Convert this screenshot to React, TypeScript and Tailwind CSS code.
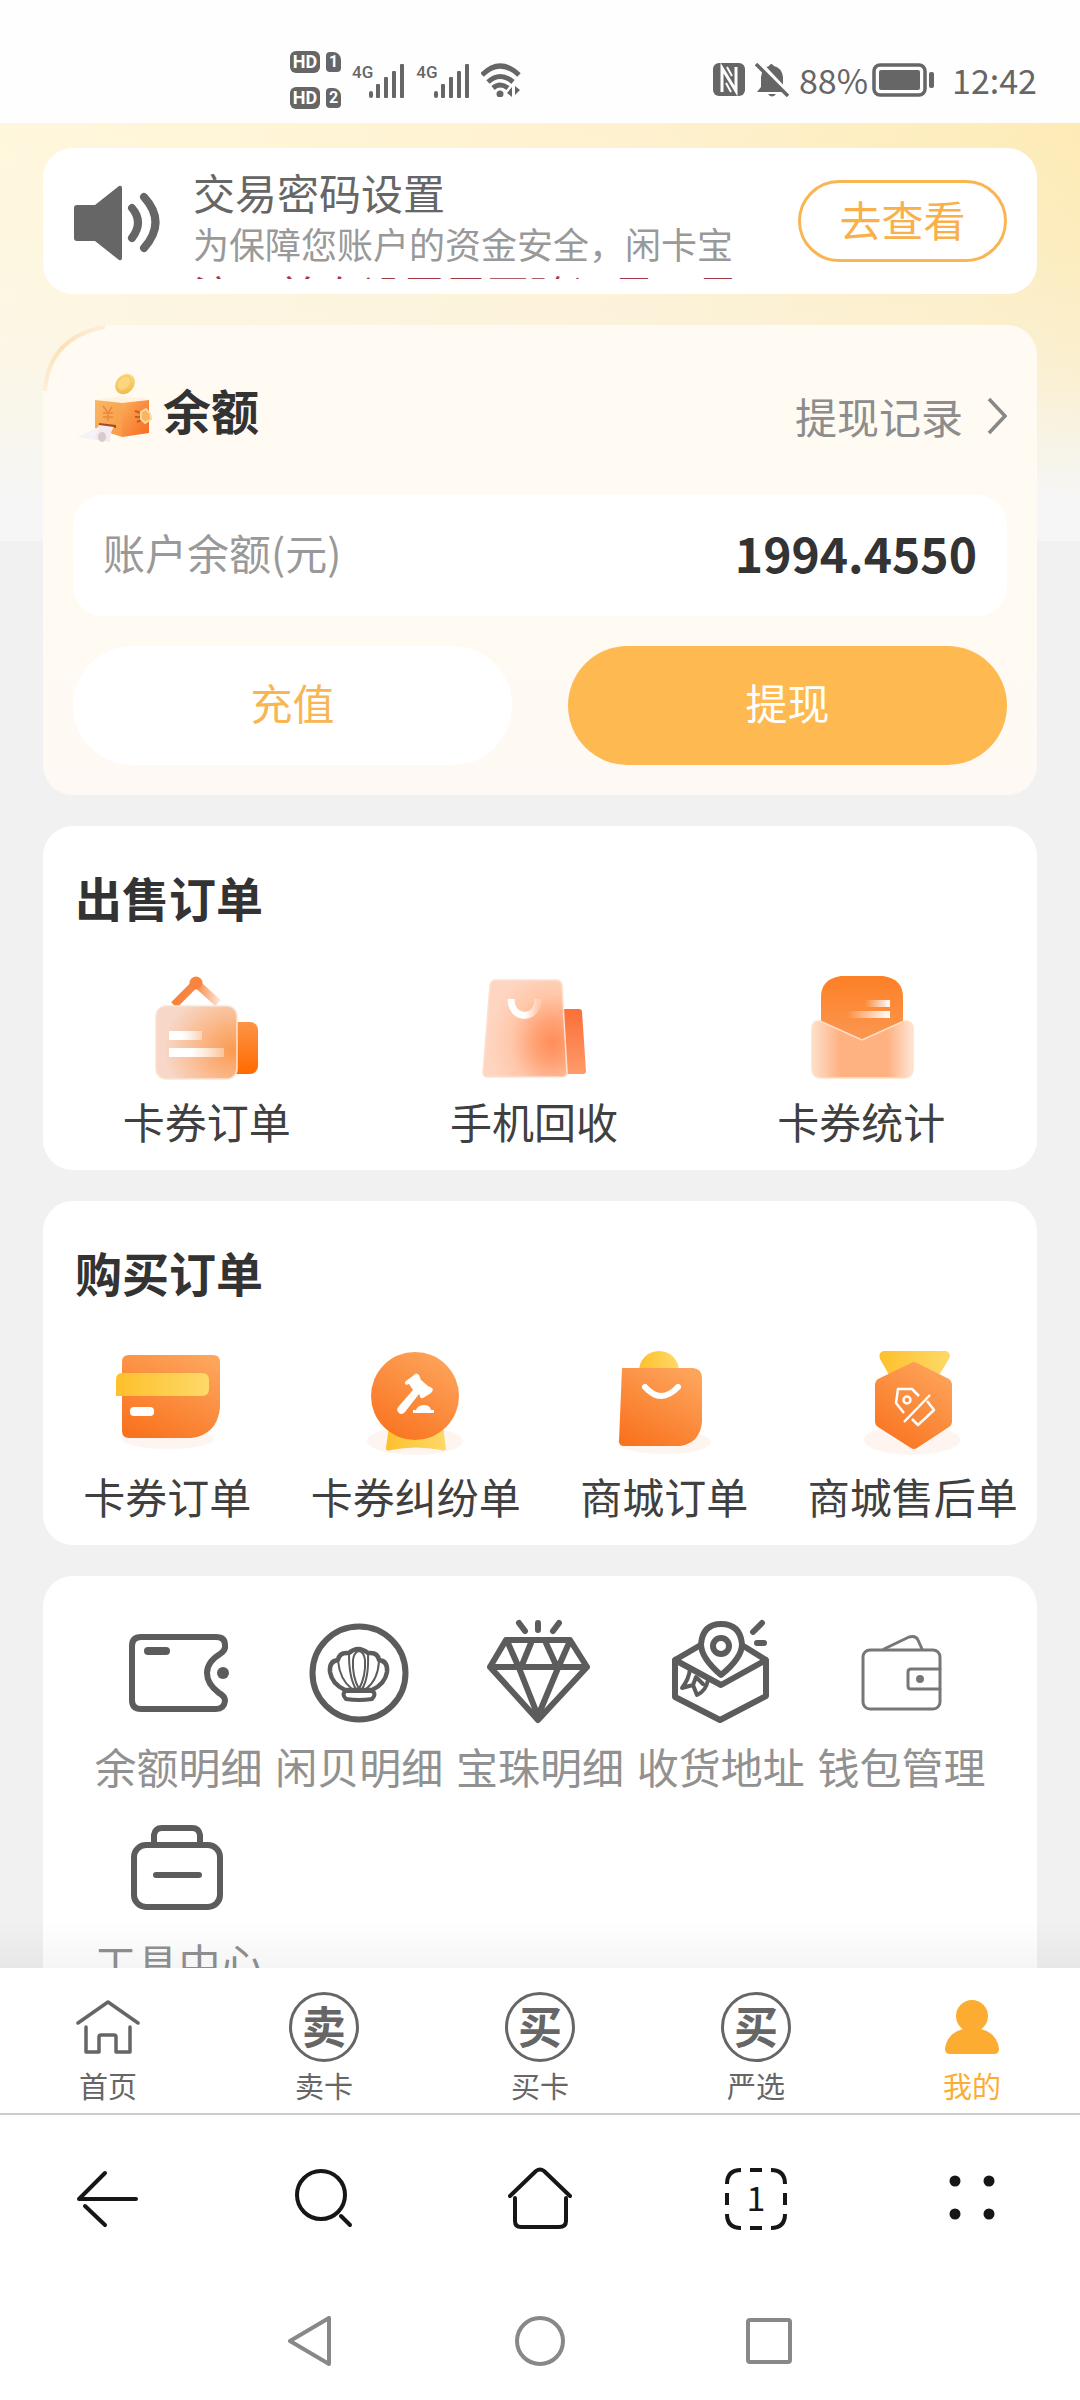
import type { ReactNode } from "react";

function SignalBars() {
  return (
    <div className="flex h-9 items-end">
      <span className="self-start font-[Roboto] text-[17px] leading-5 font-medium">4G</span>
      <svg width="36" height="34" viewBox="0 0 36 34" className="-ml-1" fill="#666">
        <rect x="0" y="27" width="4" height="7" rx="2" />
        <rect x="7" y="20" width="4" height="14" rx="1" />
        <rect x="15" y="13" width="4" height="21" rx="1" />
        <rect x="23" y="7" width="4" height="27" rx="1" />
        <rect x="31" y="0" width="4" height="34" rx="1" />
      </svg>
    </div>
  );
}

function HdBadge({ sim }: { sim: string }) {
  return (
    <div className="flex items-center gap-1.5 font-[Roboto] font-bold text-white">
      <span className="flex h-[22px] w-[30px] items-center justify-center rounded-md bg-[#666] text-[18px] leading-none">HD</span>
      <span className="flex h-5 w-[15px] items-center justify-center rounded-sm rounded-tr-lg bg-[#666] text-[16px] leading-none">{sim}</span>
    </div>
  );
}

function StatusBar() {
  return (
    <header className="flex h-[123px] shrink-0 items-center justify-between bg-[#fefefe] pt-9 pr-[43px] pl-[290px] text-[#666]">
      <div className="flex items-center gap-[11px]">
        <div className="flex flex-col gap-3.5">
          <HdBadge sim="1" />
          <HdBadge sim="2" />
        </div>
        <SignalBars />
        <SignalBars />
        <svg width="42" height="34" viewBox="0 0 42 34" fill="none" stroke="#666" strokeWidth="5">
          <path d="M1 12Q19 -6 38 12" />
          <path d="M7 19Q19 8 32 19" />
          <path d="M12 25Q19 19 27 25" />
          <circle cx="19" cy="31" r="3.5" fill="#666" stroke="none" />
          <path d="M26 30l5-6v10zM34 23v9l5-5z" fill="#666" stroke="none" />
        </svg>
      </div>
      <div className="flex items-center gap-2.5">
        <svg width="32" height="33" viewBox="0 0 32 33">
          <rect width="32" height="33" rx="6" fill="#666" />
          <path d="M9 29V5L23 28V4" fill="none" stroke="#fefefe" strokeWidth="3" />
          <path d="M14 4L19 13M18 29L13 20" stroke="#fefefe" strokeWidth="2" />
        </svg>
        <svg width="34" height="34" viewBox="0 0 34 34" fill="#666">
          <path d="M2 29L6 24V14Q7 5 14 3Q16 -1 19 3Q27 5 28 14V24L32 29ZM13 31H21Q17 36 13 31Z" />
          <path d="M4 -1L35 32" stroke="#fefefe" strokeWidth="4" />
          <path d="M1 1L33 33" stroke="#666" strokeWidth="3.5" />
        </svg>
        <div className="flex items-center gap-1">
          <span className="font-['Noto_Sans_CJK_SC'] text-[34px] leading-9">88%</span>
          <svg width="64" height="34" viewBox="0 0 64 34">
            <rect x="2" y="2" width="51" height="30" rx="6" fill="none" stroke="#666" strokeWidth="3.5" />
            <rect x="7" y="7" width="41" height="20" rx="2" fill="#666" />
            <rect x="57" y="9" width="5" height="16" rx="2" fill="#666" />
          </svg>
        </div>
        <span className="pl-1.5 font-['Noto_Sans_CJK_SC'] text-[34px] leading-9">12:42</span>
      </div>
    </header>
  );
}

function Notice() {
  return (
    <section className="flex items-start rounded-[30px] bg-white px-[30px] pt-5 pb-[15px]">
      <svg width="88" height="78" viewBox="0 0 88 78" className="mt-4 shrink-0" fill="none">
        <path d="M4 21H22L46 2Q49 1 49 4V74Q49 77 46 76L22 57H4Q1 57 1 54V24Q1 21 4 21Z" fill="#666" />
        <path d="M59 24Q71 38 59 54M71 13Q94 38 71 64" stroke="#666" strokeWidth="8" strokeLinecap="round" />
      </svg>
      <div className="ml-8 h-[111px] min-w-0 flex-1 overflow-hidden">
        <h2 className="text-[42px] leading-[48px] text-[#666]">交易密码设置</h2>
        <p className="truncate text-[36px] leading-[54px] text-[#999]">为保障您账户的资金安全，闲卡宝</p>
        <p className="w-[540px] overflow-hidden text-[42px] leading-[48px] whitespace-nowrap text-[#a33a45]">注：首次设置需要验证是否是</p>
      </div>
      <button className="mt-3 h-[82px] w-[209px] shrink-0 rounded-full border-3 border-[#f9b552] pb-1 text-[42px] leading-none text-[#f9b04a]">去查看</button>
    </section>
  );
}

function MoneyBoxIcon() {
  return (
    <svg width="82" height="96" viewBox="0 0 82 96" className="shrink-0">
      <defs>
        <linearGradient id="boxFront" x1="0" y1="0" x2="1" y2="1">
          <stop offset="0" stopColor="#fbb765" />
          <stop offset="1" stopColor="#f79a45" />
        </linearGradient>
        <linearGradient id="boxSide" x1="0" y1="0" x2="1" y2="1">
          <stop offset="0" stopColor="#fbae5a" />
          <stop offset="1" stopColor="#f76a20" />
        </linearGradient>
        <linearGradient id="coin" x1="0" y1="0" x2="1" y2="1">
          <stop offset="0" stopColor="#fde49a" />
          <stop offset="1" stopColor="#efb340" />
        </linearGradient>
      </defs>
      <path d="M22 39L49 35L76 38L49 43Z" fill="#fff3e0" />
      <path d="M22 39L49 42V76L22 67Z" fill="url(#boxFront)" />
      <path d="M49 42L76 39V72L49 76Z" fill="url(#boxSide)" />
      <ellipse cx="52" cy="23" rx="9" ry="11" transform="rotate(40 52 23)" fill="url(#coin)" />
      <ellipse cx="51" cy="22" rx="6" ry="8" transform="rotate(40 51 22)" fill="#fbd67c" stroke="#f3c864" strokeWidth="1" />
      <path d="M30 45L35 52L39 46M35 52V60M30 52H40M30 56H40" fill="none" stroke="#e8893c" strokeWidth="1.5" />
      <path d="M26 62L43 64V67L26 65Z" fill="#a84a22" />
      <path d="M26 64L41 66Q37 71 37 81L20 78Q22 70 26 64Z" fill="#f4e9ec" />
      <path d="M4 76L26 66L21 79Z" fill="#f5f3f6" />
      <ellipse cx="29" cy="76" rx="4" ry="5" fill="#d8c8cf" />
      <path d="M62 50l6 2M62 56h6M64 61l4-2" stroke="#c85d20" strokeWidth="2" />
      <path d="M68 51L73 48L77 53L78 58L72 62L68 58Z" fill="#fbb45f" stroke="#ffd79b" strokeWidth="2" />
    </svg>
  );
}

function Balance() {
  return (
    <section className="relative rounded-[30px] rounded-tl-[72px] bg-linear-to-b from-[#fffaf3] via-[#fffbf2] to-[#fef9f4] px-[30px] pt-8 pb-[30px]">
      <svg width="70" height="70" viewBox="0 0 70 70" className="absolute top-0 left-0" fill="none">
        <defs>
          <linearGradient id="cornerArc" x1="0" y1="1" x2="1" y2="0">
            <stop offset="0" stopColor="#fde3bd" stopOpacity="0.5" />
            <stop offset="0.5" stopColor="#fde0b8" />
            <stop offset="1" stopColor="#fde3bd" stopOpacity="0.5" />
          </linearGradient>
        </defs>
        <path d="M2 66Q6 12 62 2" stroke="url(#cornerArc)" strokeWidth="4" />
      </svg>
      <div className="flex h-[104px] items-center justify-between">
        <div className="flex items-center gap-2">
          <MoneyBoxIcon />
          <h2 className="text-[48px] leading-[60px] font-bold text-[#333]">余额</h2>
        </div>
        <a href="#records" className="flex items-center gap-6 pt-3.5 text-[42px] leading-[60px] text-[#8d8d8d]">
          提现记录
          <svg width="20" height="38" viewBox="0 0 20 38" fill="none" stroke="#888" strokeWidth="3.5">
            <path d="M2 2L18 19L2 36" />
          </svg>
        </a>
      </div>
      <div className="mt-[34px] flex h-[121px] items-center justify-between rounded-[30px] bg-white px-[30px] pb-2">
        <span className="text-[42px] leading-[60px] text-[#999]">账户余额(元)</span>
        <strong className="text-[48px] leading-[60px] font-bold text-[#333]">1994.4550</strong>
      </div>
      <div className="mt-[30px] grid grid-cols-2 gap-14">
        <button className="h-[119px] rounded-full bg-white pb-2 text-[42px] text-[#f9b552]">充值</button>
        <button className="h-[119px] rounded-full bg-[#feb950] pb-2 text-[42px] text-white">提现</button>
      </div>
    </section>
  );
}

function HangTagIcon() {
  return (
    <svg width="110" height="120" viewBox="0 0 110 120">
      <defs>
        <linearGradient id="tagHook" x1="0" y1="0" x2="1" y2="0">
          <stop offset="0" stopColor="#f9813a" />
          <stop offset="0.5" stopColor="#fa8745" />
          <stop offset="1" stopColor="#fde0cd" />
        </linearGradient>
        <linearGradient id="tagBack" x1="0" y1="0" x2="0" y2="1">
          <stop offset="0" stopColor="#fd9445" />
          <stop offset="1" stopColor="#ff6a00" />
        </linearGradient>
        <radialGradient id="tagFace" cx="0.95" cy="0.6" r="0.85">
          <stop offset="0" stopColor="#fb9a4f" />
          <stop offset="0.5" stopColor="#fab98c" />
          <stop offset="1" stopColor="#f7d7c8" />
        </radialGradient>
        <linearGradient id="fadeRight" x1="0" y1="0" x2="1" y2="0">
          <stop offset="0.4" stopColor="#fff" />
          <stop offset="1" stopColor="#fff" stopOpacity="0.35" />
        </linearGradient>
      </defs>
      <path d="M22 44L44 22L66 42" fill="none" stroke="url(#tagHook)" strokeWidth="8" />
      <circle cx="44" cy="22" r="6.5" fill="#f98440" />
      <rect x="74" y="61" width="32" height="52" rx="8" fill="url(#tagBack)" />
      <rect x="4" y="45" width="81" height="73" rx="10" fill="url(#tagFace)" stroke="#fde3d2" strokeWidth="1.5" />
      <rect x="17" y="70" width="33" height="9" fill="url(#fadeRight)" />
      <rect x="17" y="87" width="55" height="9" fill="url(#fadeRight)" />
    </svg>
  );
}

function RecycleBagIcon() {
  return (
    <svg width="110" height="120" viewBox="0 0 110 120">
      <defs>
        <linearGradient id="bagBack" x1="0" y1="0" x2="0" y2="1">
          <stop offset="0" stopColor="#fb6f37" />
          <stop offset="1" stopColor="#ff9a6a" />
        </linearGradient>
        <radialGradient id="bagFace" cx="0.83" cy="0.64" r="0.75">
          <stop offset="0" stopColor="#ff8d57" />
          <stop offset="0.3" stopColor="#ffa377" />
          <stop offset="0.65" stopColor="#ffc7a9" />
          <stop offset="1" stopColor="#fed5c0" />
        </radialGradient>
        <linearGradient id="bagHandle" x1="0" y1="0" x2="1" y2="0">
          <stop offset="0.5" stopColor="#fff" />
          <stop offset="1" stopColor="#fff" stopOpacity="0.2" />
        </linearGradient>
      </defs>
      <path d="M80 48H100Q103 48 103 51L107 110Q107 113 104 113H80Z" fill="url(#bagBack)" />
      <path d="M17 19H77Q82 19 83 24L88 111Q88 116 83 116H9Q4 116 4 111L11 24Q12 19 17 19Z" fill="url(#bagFace)" stroke="#fee0cf" strokeWidth="1.5" />
      <path d="M32 38C32 60 59 60 59 38" fill="none" stroke="url(#bagHandle)" strokeWidth="7" />
    </svg>
  );
}

function EnvelopeIcon() {
  return (
    <svg width="110" height="120" viewBox="0 0 110 120">
      <defs>
        <linearGradient id="letter" x1="0" y1="0" x2="0" y2="1">
          <stop offset="0" stopColor="#fd8026" />
          <stop offset="1" stopColor="#fb9955" />
        </linearGradient>
        <linearGradient id="pocket" x1="0" y1="0" x2="1" y2="0">
          <stop offset="0" stopColor="#fedfcc" />
          <stop offset="0.28" stopColor="#feb281" />
          <stop offset="0.75" stopColor="#feb281" />
          <stop offset="1" stopColor="#fee5d6" />
        </linearGradient>
        <linearGradient id="fadeLeft" x1="0" y1="0" x2="1" y2="0">
          <stop offset="0" stopColor="#fff" stopOpacity="0" />
          <stop offset="1" stopColor="#fff" />
        </linearGradient>
      </defs>
      <path d="M35 15H77Q97 18 97 36V85H15V36Q15 18 35 15Z" fill="url(#letter)" />
      <rect x="59" y="39" width="25" height="7" fill="url(#fadeLeft)" />
      <rect x="41" y="50" width="43" height="7" fill="url(#fadeLeft)" />
      <path d="M14 60L56 79L98 60Q107 59 107 68V107Q107 117 97 117H16Q6 117 6 107V68Q6 59 14 60Z" fill="url(#pocket)" stroke="#ffe0c8" strokeWidth="1.5" />
    </svg>
  );
}

function OrangeDefs({ id }: { id: string }) {
  return (
    <defs>
      <linearGradient id={id} x1="0.8" y1="0" x2="0.2" y2="1">
        <stop offset="0" stopColor="#fda55c" />
        <stop offset="1" stopColor="#f9731f" />
      </linearGradient>
      <linearGradient id={id + "Gold"} x1="0" y1="0" x2="1" y2="0">
        <stop offset="0" stopColor="#fec02c" />
        <stop offset="1" stopColor="#fdd968" />
      </linearGradient>
    </defs>
  );
}

function CardIcon() {
  return (
    <svg width="110" height="110" viewBox="0 0 110 110">
      <OrangeDefs id="card" />
      <ellipse cx="56" cy="93" rx="46" ry="10" fill="#fef5f0" />
      <path d="M17 9H101Q108 9 108 16V62Q105 89 79 92H17Q10 92 10 85V16Q10 9 17 9Z" fill="url(#card)" />
      <path d="M10 27H90Q97 27 97 34V43Q97 50 90 50H4V34Q4 27 10 27Z" fill="url(#cardGold)" />
      <rect x="18" y="61" width="24" height="9" rx="4" fill="#fff" />
    </svg>
  );
}

function GavelIcon() {
  return (
    <svg width="110" height="110" viewBox="0 0 110 110">
      <OrangeDefs id="gavel" />
      <ellipse cx="54" cy="95" rx="48" ry="14" fill="#fef5f0" />
      <path d="M28 80H82L85 103Q84 106 80 104Q55 99 30 104Q25 106 25 102Z" fill="url(#gavelGold)" />
      <circle cx="54" cy="50" r="44" fill="url(#gavel)" />
      <path d="M53 29Q55 26 58 29L60 34L67 40L71 42Q73 44 70 47L62 52Q59 53 59 50L58 48L44 66Q40 70 37 66Q35 63 38 60L52 44L48 38L45 39Q43 36 45 35Z" fill="#fff" />
      <path d="M52 67V64H55Q57 59 63 59Q69 59 70 64H73V67Z" fill="#fff" />
    </svg>
  );
}

function ShopBagIcon() {
  return (
    <svg width="110" height="110" viewBox="0 0 110 110">
      <OrangeDefs id="shop" />
      <ellipse cx="55" cy="96" rx="47" ry="12" fill="#fef5f0" />
      <circle cx="50" cy="25" r="20" fill="url(#shopGold)" />
      <path d="M13 22H84Q93 23 93 32V76Q91 97 71 100H15Q10 100 10 95Z" fill="url(#shop)" />
      <path d="M36 41Q52 59 69 41" fill="none" stroke="#fff" strokeWidth="6" strokeLinecap="round" />
    </svg>
  );
}

function MedalIcon() {
  return (
    <svg width="110" height="110" viewBox="0 0 110 110">
      <OrangeDefs id="medal" />
      <ellipse cx="54" cy="94" rx="48" ry="15" fill="#fef5f0" />
      <path d="M25 5H88Q94 7 91 13L78 34H34L22 13Q20 7 25 5Z" fill="url(#medalGold)" />
      <path d="M53 17Q56 15 59 17L91 33Q94 35 94 38V76Q94 79 91 81L59 102Q56 104 53 102L20 81Q17 79 17 76V38Q17 35 20 33Z" fill="url(#medal)" />
      <g fill="none" stroke="#fff" strokeWidth="2.5" strokeLinejoin="round">
        <path d="M46 67L38 57L40 43L54 43L61 50M69 55L76 64L60 79L54 73M72 49L46 76" />
        <circle cx="49" cy="54" r="3.5" />
      </g>
    </svg>
  );
}

function LineIcon({ children, thin = false }: { children: ReactNode; thin?: boolean }) {
  return (
    <svg width="110" height="110" viewBox="0 0 110 110" fill="none" stroke={thin ? "#777" : "#5c5c5c"} strokeWidth={thin ? 3 : 6} strokeLinejoin="round" strokeLinecap="round">
      {children}
    </svg>
  );
}

const sellItems = [
  { label: "卡券订单", icon: <HangTagIcon /> },
  { label: "手机回收", icon: <RecycleBagIcon /> },
  { label: "卡券统计", icon: <EnvelopeIcon /> },
];

const buyItems = [
  { label: "卡券订单", icon: <CardIcon /> },
  { label: "卡券纠纷单", icon: <GavelIcon /> },
  { label: "商城订单", icon: <ShopBagIcon /> },
  { label: "商城售后单", icon: <MedalIcon /> },
];

const toolItems = [
  {
    label: "余额明细",
    icon: (
      <LineIcon>
        <path d="M18 19H93Q102 19 102 27Q103 32 97 36Q84 44 84 55Q84 66 96 75Q102 78 102 83Q101 91 93 91H18Q9 91 9 82V28Q9 19 18 19Z" />
        <path d="M25 33H43" strokeWidth="8" />
        <circle cx="100" cy="55" r="6" fill="#5c5c5c" stroke="none" />
      </LineIcon>
    ),
  },
  {
    label: "闲贝明细",
    icon: (
      <LineIcon>
        <circle cx="55" cy="55" r="46.5" />
        <path d="M41 72Q28 66 26 54Q25 43 34 42Q35 34 45 35Q54 27 64 35Q74 34 75 42Q84 43 83 54Q81 66 68 72Z" strokeWidth="4.5" />
        <path d="M34 43Q36 62 48 71M45 36Q45 60 52 71M49 42Q50 34 55 33Q60 34 61 42Q62 58 55 71Q48 58 49 42M64 36Q65 60 58 71M75 43Q74 62 62 71" strokeWidth="2" />
        <path d="M42 73H68Q73 76 68 81Q55 83 42 81Q37 76 42 73Z" strokeWidth="4" fill="#fff" />
      </LineIcon>
    ),
  },
  {
    label: "宝珠明细",
    icon: (
      <LineIcon>
        <path d="M21 22H85L102 49L53 102L5 49ZM5 49H102M23 25L34 50L53 98L73 50L84 25M46 25L37 47M61 25L71 47" />
        <path d="M53 5V12M34 5L40 13M74 5L68 13" />
      </LineIcon>
    ),
  },
  {
    label: "收货地址",
    icon: (
      <LineIcon>
        <path d="M33 28L9 42V79L54 102L100 78V42L79 29M9 42L55 67L100 42" />
        <path d="M24 51Q23 61 16 70L27 67L31 77Q40 73 42 62M27 67L30 59L37 66" strokeWidth="4" />
        <path d="M55 57Q35 40 35 26Q37 6 55 6Q74 6 76 26Q76 40 55 57Z" fill="#fff" />
        <circle cx="55" cy="28" r="8" />
        <path d="M87 14L96 5M91 25H98" />
      </LineIcon>
    ),
  },
  {
    label: "钱包管理",
    icon: (
      <LineIcon thin>
        <rect x="16" y="32" width="77" height="59" rx="7" />
        <path d="M37 31L62 19Q69 17 71 22L75 31M93 51H64Q61 51 61 54V68Q61 71 64 71H93" />
        <circle cx="73" cy="61" r="4" fill="#777" stroke="none" />
      </LineIcon>
    ),
  },
  {
    label: "工具中心",
    icon: (
      <LineIcon>
        <rect x="11" y="31" width="86" height="62" rx="12" />
        <path d="M31 29V21Q32 14 39 14H69Q76 14 77 21V29M33 61H76" />
      </LineIcon>
    ),
  },
];

function OrderCard({ title, children }: { title: string; children: ReactNode }) {
  return (
    <section className="rounded-[30px] bg-white pt-[41px] pb-[19px]">
      <h2 className="px-8 text-[47px] leading-[60px] font-bold text-[#333]">{title}</h2>
      {children}
    </section>
  );
}

function HomeIcon() {
  return (
    <svg width="64" height="56" viewBox="0 0 64 56" fill="none" stroke="#666" strokeWidth="3.5" strokeLinecap="round" strokeLinejoin="round">
      <path d="M2 24L32 3L62 24M10 28V53H23V38Q23 36 25 36H38Q40 36 40 38V53H54V28" />
    </svg>
  );
}

function CircleGlyph({ glyph }: { glyph: string }) {
  return (
    <span aria-hidden="true" className="flex size-[70px] items-center justify-center rounded-full border-3 border-[#666] pb-1 text-[44px] leading-none font-bold">
      {glyph}
    </span>
  );
}

function PersonIcon() {
  return (
    <svg width="56" height="56" viewBox="0 0 56 56" fill="#fdac32">
      <circle cx="28" cy="17" r="16" />
      <path d="M19 30H37Q53 34 55 50Q55 55 50 55H6Q1 55 1 50Q3 34 19 30Z" />
    </svg>
  );
}

const tabs = [
  { label: "首页", icon: <HomeIcon /> },
  { label: "卖卡", icon: <CircleGlyph glyph="卖" /> },
  { label: "买卡", icon: <CircleGlyph glyph="买" /> },
  { label: "严选", icon: <CircleGlyph glyph="买" /> },
  { label: "我的", icon: <PersonIcon />, active: true },
];

const browserButtons = [
  { label: "后退", icon: <path d="M60 32H3L29 6M9 39L29 58" /> },
  {
    label: "搜索",
    icon: (
      <>
        <circle cx="29" cy="28" r="24" />
        <path d="M49 49L58 58" />
      </>
    ),
  },
  { label: "主页", icon: <path d="M2 29L28 4Q32 1 36 4L62 29M7 31V54Q7 60 13 60H51Q58 60 58 54V31" /> },
];

export default function App() {
  return (
    <div className="flex h-screen flex-col overflow-hidden bg-[#f1f1f1] font-['Noto_Sans_CJK_SC',sans-serif]">
      <StatusBar />
      <main className="relative min-h-0 flex-1 overflow-hidden">
        <div className="absolute inset-x-0 top-0 h-[418px] bg-[linear-gradient(to_bottom,rgba(246,246,246,0)_0%,rgba(246,246,246,0.15)_30%,rgba(246,246,246,0.45)_60%,rgba(246,246,246,1)_90%),linear-gradient(100deg,#fff7dd_0%,#fff1cf_55%,#fdeab2_100%)]" />
        <div className="relative flex flex-col gap-[31px] px-[43px] pt-[25px]">
          <Notice />
          <Balance />
          <OrderCard title="出售订单">
            <ul className="mt-[34px] mr-3 grid grid-cols-3">
              {sellItems.map((item) => (
                <li key={item.label}>
                  <a href="#sell" className="flex flex-col items-center gap-2.5 text-[42px] leading-[60px] text-[#404040]">
                    {item.icon}
                    {item.label}
                  </a>
                </li>
              ))}
            </ul>
          </OrderCard>
          <OrderCard title="购买订单">
            <ul className="mt-11 grid grid-cols-4">
              {buyItems.map((item) => (
                <li key={item.label}>
                  <a href="#buy" className="flex flex-col items-center gap-2.5 text-[42px] leading-[60px] whitespace-nowrap text-[#404040]">
                    {item.icon}
                    {item.label}
                  </a>
                </li>
              ))}
            </ul>
          </OrderCard>
          <section className="rounded-[30px] bg-white px-[45px] pt-[42px] pb-11">
            <ul className="grid grid-cols-5 gap-y-[18px]">
              {toolItems.map((item) => (
                <li key={item.label}>
                  <a href="#tools" className="flex flex-col items-center gap-2 text-[42px] leading-[60px] whitespace-nowrap text-[#919191]">
                    {item.icon}
                    {item.label}
                  </a>
                </li>
              ))}
            </ul>
          </section>
        </div>
        <div className="absolute inset-x-0 bottom-0 h-12 bg-linear-to-b from-black/0 to-black/4" />
      </main>
      <nav className="grid h-[147px] shrink-0 grid-cols-5 border-b-2 border-[#ccc] bg-white pt-[23px]">
        {tabs.map((tab) => (
          <a key={tab.label} href="#tab" className={tab.active ? "flex flex-col items-center text-[29px] leading-[44px] text-[#fdac32]" : "flex flex-col items-center text-[29px] leading-[44px] text-[#666]"}>
            <span className="flex h-[72px] items-center justify-center">{tab.icon}</span>
            {tab.label}
          </a>
        ))}
      </nav>
      <div className="grid h-[168px] shrink-0 grid-cols-5 items-center justify-items-center bg-white">
        {browserButtons.map((b) => (
          <button key={b.label} aria-label={b.label}>
            <svg width="64" height="64" viewBox="0 0 64 64" fill="none" stroke="#161616" strokeWidth="4" strokeLinecap="round" strokeLinejoin="round">
              {b.icon}
            </svg>
          </button>
        ))}
        <button aria-label="标签页" className="relative flex size-16 items-center justify-center pb-1 text-[34px] leading-none text-[#161616]">
          <svg width="64" height="64" viewBox="0 0 64 64" className="absolute inset-0" fill="none" stroke="#161616" strokeWidth="4">
            <path d="M3 17Q3 3 17 3M47 3Q61 3 61 17M61 47Q61 61 47 61M17 61Q3 61 3 47M26 3H38M26 61H38M3 26V38M61 26V38" />
          </svg>
          1
        </button>
        <button aria-label="更多">
          <svg width="64" height="64" viewBox="0 0 64 64" fill="#161616">
            <circle cx="15" cy="14" r="5.5" />
            <circle cx="49" cy="14" r="5.5" />
            <circle cx="15" cy="47" r="5.5" />
            <circle cx="49" cy="47" r="5.5" />
          </svg>
        </button>
      </div>
      <div className="flex h-[117px] shrink-0 items-center justify-center gap-[178px] bg-white">
        <button aria-label="返回">
          <svg width="50" height="52" viewBox="0 0 50 52" fill="none" stroke="#888" strokeWidth="4" strokeLinejoin="round">
            <path d="M43 2V48L4 25Z" />
          </svg>
        </button>
        <button aria-label="桌面">
          <svg width="52" height="52" viewBox="0 0 52 52" fill="none" stroke="#888" strokeWidth="4">
            <circle cx="26" cy="25" r="23" />
          </svg>
        </button>
        <button aria-label="最近任务">
          <svg width="50" height="52" viewBox="0 0 50 52" fill="none" stroke="#888" strokeWidth="4">
            <rect x="4" y="4" width="42" height="42" rx="2" />
          </svg>
        </button>
      </div>
    </div>
  );
}
